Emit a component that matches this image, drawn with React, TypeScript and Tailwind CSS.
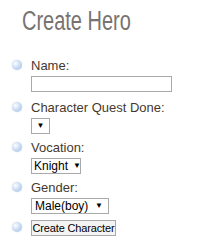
export default function App() {
  const fields = [
    { label: "Name:", kind: "input" },
    { label: "Character Quest Done:", kind: "empty" },
    { label: "Vocation:", kind: "knight" },
    { label: "Gender:", kind: "gender" },
  ];

  const bullet = (
    <span className="mt-[2px] h-[10px] w-[10px] shrink-0 rounded-full bg-[radial-gradient(circle_at_35%_35%,#ffffff_0%,#d6e4f6_35%,#9fbde6_100%)] shadow-[0_0_1px_rgba(120,150,200,0.6)]" />
  );

  return (
    <div className="h-[250px] w-[201px] bg-white font-['Liberation_Sans',Arial,sans-serif] text-[13px] text-[#45392d]">
      <h1 className="pl-[22px] pt-[4px] text-[27px] leading-[34px] text-[#777370]">
        <span className="inline-block origin-left scale-x-[0.74]">Create Hero</span>
      </h1>
      <ul className="mt-[20px] flex flex-col gap-[6px] pl-[12px]">
        {fields.map((f) => (
          <li key={f.label} className={`flex gap-[9px] ${f.kind === "input" ? "mb-[2px]" : ""}`}>
            {bullet}
            <div className="flex flex-col gap-[3px]">
              <span className="leading-[15px]">{f.label}</span>
              {f.kind === "input" && (
                <div className="h-[16px] w-[141px] border border-[#a9a9a9] bg-white" />
              )}
              {f.kind === "empty" && (
                <div className="flex h-[16px] w-[19px] items-center justify-center border border-[#a9a9a9] bg-white text-[8px] text-black">
                  ▼
                </div>
              )}
              {f.kind === "knight" && (
                <div className="flex h-[16px] w-[50px] items-center gap-[5px] border border-[#a9a9a9] bg-white pl-[2px] text-[12px] leading-none text-black">
                  <span>Knight</span>
                  <span className="text-[8px]">▼</span>
                </div>
              )}
              {f.kind === "gender" && (
                <div className="flex h-[16px] w-[78px] items-center justify-between border border-[#a9a9a9] bg-white pl-[3px] pr-[5px] text-[12px] leading-none text-black">
                  <span>Male(boy)</span>
                  <span className="text-[8px]">▼</span>
                </div>
              )}
            </div>
          </li>
        ))}
        <li className="flex gap-[9px]">
          {bullet}
          <button
            type="button"
            className="h-[16px] w-[85px] whitespace-nowrap border border-[#a9a9a9] bg-[#f4f4f4] px-0 text-[11px] leading-none tracking-[-0.15px] text-black"
          >
            Create Character
          </button>
        </li>
      </ul>
    </div>
  );
}
